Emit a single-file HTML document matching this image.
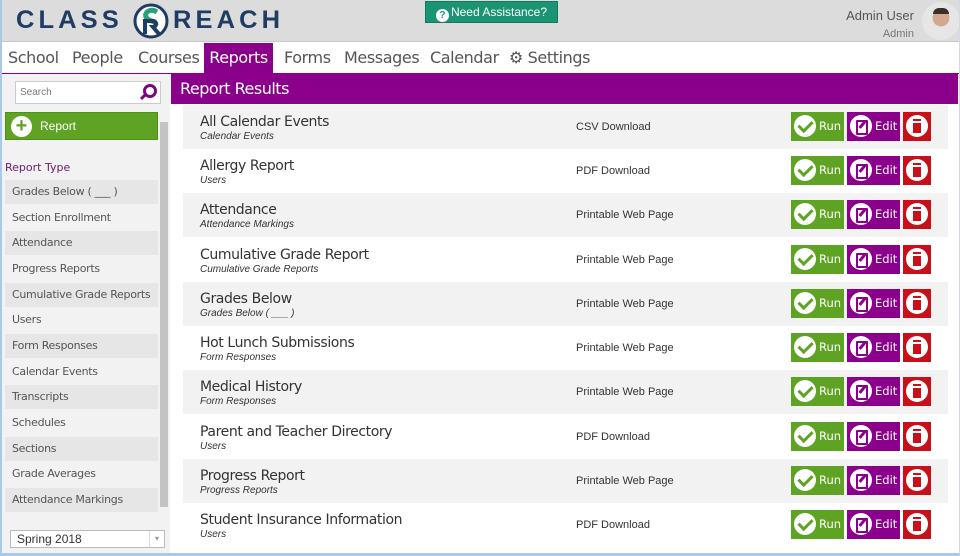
<!DOCTYPE html>
<html><head><style>
*{box-sizing:border-box;margin:0;padding:0}
body{width:960px;height:556px;overflow:hidden;background:#fff;font-family:"Liberation Sans",sans-serif;position:relative}
.frame{position:absolute;left:0;top:0;width:960px;height:556px;border-left:2px solid #a9c9e8;border-bottom:3px solid #a9c9e8;border-right:1px solid #cfdbe8}
.hdr{position:absolute;left:2px;top:0;width:957px;height:42px;background:#dcdcdc;border-bottom:1px solid #c8c8c8}
.logo{position:absolute;top:6px;font-size:25px;font-weight:bold;color:#1f3d63;letter-spacing:4px;transform:scaleX(1.02);transform-origin:left}
.help{position:absolute;left:423px;top:1px;width:133px;height:22px;background:#1b9473;border:1px solid #147a5e;color:#fff;font-size:12px;text-align:center;line-height:20px}
.help b{display:inline-block;width:13px;height:13px;border-radius:50%;background:#fff;color:#1b9473;font-size:10px;line-height:13px;vertical-align:-2px;margin-right:2px}
.user{position:absolute;right:45px;top:7px;text-align:right;color:#555;font-size:13px;line-height:17px}
.user small{font-size:11px;color:#777}
.av{position:absolute;left:920px;top:2px;width:38px;height:38px;border-radius:50%;background:radial-gradient(circle at 50% 42%,#d4a88e 0 28%,#e6e6e6 30%);overflow:hidden}
.av:after{content:"";position:absolute;left:11px;top:6px;width:16px;height:6px;background:#3a2e28;border-radius:6px 6px 0 0}
.nav{position:absolute;left:2px;top:43px;height:31px;width:957px;background:#fff;border-bottom:1px solid #8b008b}
.nav span{position:absolute;top:0;height:30px;line-height:30px;font-size:16px;color:#555;font-family:"DejaVu Sans",sans-serif;letter-spacing:-0.4px}
.nav .on{background:#8b008b;color:#fff;width:69px;text-align:center}
.side{position:absolute;left:2px;top:74px;width:168px;height:479px;background:#f2f2f2}
.search{position:absolute;left:13px;top:7px;width:146px;height:23px;background:#fff;border:1px solid #ccc;font-size:10px;color:#777;padding:5px 4px}
.mag{position:absolute;right:3px;top:2px;width:14px;height:14px;border:3px solid #7a0a7a;border-radius:50%}
.mag:after{content:"";position:absolute;left:-6px;top:8px;width:7px;height:3px;background:#7a0a7a;transform:rotate(-45deg)}
.add{position:absolute;left:3px;top:38px;width:153px;height:28px;background:#5fa324;border:1px solid #4e8e1a;color:#fff;font-size:12px;line-height:26px;padding-left:34px}
.add i{position:absolute;left:5px;top:3px;width:21px;height:21px;border-radius:50%;background:#fff;color:#5fa324;font-style:normal;font-weight:bold;font-size:20px;line-height:21px;text-align:center}
.rt{position:absolute;left:3px;top:87px;font-size:11px;color:#6a1a6a;font-family:"DejaVu Sans",sans-serif}
.li{position:absolute;left:3px;width:153px;height:24px;font-size:11px;color:#555;line-height:24px;padding-left:7px;font-family:"DejaVu Sans",sans-serif;letter-spacing:-0.3px}
.li.g{background:#e6e6e6}
.sb{position:absolute;left:157px;top:40px;width:9px;height:406px;background:#f2f2f2}
.sb div{position:absolute;left:1px;top:8px;width:8px;height:385px;background:#c3c3c3}
.sel{position:absolute;left:8px;top:456px;width:155px;height:18px;background:#fff;border:1px solid #bbb;font-size:12px;color:#333;padding:1px 6px}
.sel:after{content:"▾";position:absolute;right:0;top:0;width:14px;height:16px;border-left:1px solid #ddd;font-size:8px;color:#999;text-align:center;line-height:16px}
.bar{position:absolute;left:171px;top:74px;width:787px;height:30px;background:#8b008b;color:#fff;font-size:16px;line-height:30px;padding-left:9px;font-family:"DejaVu Sans",sans-serif;letter-spacing:-0.5px}
.row{position:absolute;left:183px;width:765px;height:44px}
.row.g{background:#f2f2f2}
.t{position:absolute;left:17px;top:9px;font-size:14px;color:#333;font-family:"DejaVu Sans",sans-serif;letter-spacing:-0.4px}
.s{position:absolute;left:17px;top:26px;font-size:10px;color:#333;font-style:italic}
.d{position:absolute;left:393px;top:16px;font-size:11px;color:#333}
.b{position:absolute;top:7px;height:29px;color:#fff;font-size:11.5px;line-height:29px;font-family:"DejaVu Sans",sans-serif}
.run{left:608px;width:53px;background:#5fa324}
.edit{left:664px;width:53px;background:#8b008b}
.del{left:720px;width:28px;background:#c8101a}
.b i{position:absolute;left:3px;top:3px;width:22px;height:22px;border-radius:50%;background:#fff}
.run span,.edit span{position:absolute;left:28px}
.run i:after{content:"";position:absolute;left:7px;top:3px;width:6px;height:11px;border:solid #5fa324;border-width:0 3px 3px 0;transform:rotate(45deg)}
.edit i:after{content:"";position:absolute;left:6px;top:5px;width:8px;height:11px;border:2px solid #8b008b;border-radius:1px}
.edit i:before{content:"";position:absolute;left:11px;top:5px;width:3px;height:9px;background:#8b008b;transform:rotate(40deg)}
.del i:after{content:"";position:absolute;left:7px;top:6px;width:8px;height:10px;background:#c8101a;border-top:2px solid #fff;box-shadow:0 -2px 0 #c8101a}
</style></head><body>
<div class="hdr">
<div class="logo" style="left:14px">CLASS</div>
<svg style="position:absolute;left:131px;top:3px" width="36" height="36" viewBox="0 0 36 36"><circle cx="18" cy="18" r="16" fill="#fff" stroke="#1f3d63" stroke-width="3"/><path d="M24 9c-6-4-13 0-11 5s10 3 10 8" stroke="#2aa07a" stroke-width="5" fill="none"/><path d="M12 31V18h8c4 0 4 6 0 6l6 7" stroke="#1f3d63" stroke-width="4" fill="none"/></svg>
<div class="logo" style="left:171px">REACH</div>
<div class="help"><b>?</b>Need Assistance?</div>
<div class="user">Admin User<br><small>Admin</small></div>
<div class="av"></div>
</div>
<div class="nav">
<span style="left:6px">School</span><span style="left:70px">People</span><span style="left:136px">Courses</span><span class="on" style="left:202px">Reports</span><span style="left:282px">Forms</span><span style="left:342px">Messages</span><span style="left:428px">Calendar</span><span style="left:507px">⚙ Settings</span>
</div>
<div class="side">
<div class="search">Search<div class="mag"></div></div>
<div class="add"><i>+</i>Report</div>
<div class="rt">Report Type</div>
<div class="li g" style="top:106px">Grades Below ( ___ )</div>
<div class="li" style="top:132px">Section Enrollment</div>
<div class="li g" style="top:157px">Attendance</div>
<div class="li" style="top:183px">Progress Reports</div>
<div class="li g" style="top:209px">Cumulative Grade Reports</div>
<div class="li" style="top:234px">Users</div>
<div class="li g" style="top:260px">Form Responses</div>
<div class="li" style="top:286px">Calendar Events</div>
<div class="li g" style="top:311px">Transcripts</div>
<div class="li" style="top:337px">Schedules</div>
<div class="li g" style="top:363px">Sections</div>
<div class="li" style="top:388px">Grade Averages</div>
<div class="li g" style="top:414px">Attendance Markings</div>
<div class="sb"><div></div></div>
<div class="sel">Spring 2018</div>
</div>
<div class="bar">Report Results</div>

<div class="row g" style="top:105px"><div class="t">All Calendar Events</div><div class="s">Calendar Events</div><div class="d">CSV Download</div><div class="b run"><i></i><span>Run</span></div><div class="b edit"><i></i><span>Edit</span></div><div class="b del"><i></i></div></div>
<div class="row" style="top:149px"><div class="t">Allergy Report</div><div class="s">Users</div><div class="d">PDF Download</div><div class="b run"><i></i><span>Run</span></div><div class="b edit"><i></i><span>Edit</span></div><div class="b del"><i></i></div></div>
<div class="row g" style="top:193px"><div class="t">Attendance</div><div class="s">Attendance Markings</div><div class="d">Printable Web Page</div><div class="b run"><i></i><span>Run</span></div><div class="b edit"><i></i><span>Edit</span></div><div class="b del"><i></i></div></div>
<div class="row" style="top:238px"><div class="t">Cumulative Grade Report</div><div class="s">Cumulative Grade Reports</div><div class="d">Printable Web Page</div><div class="b run"><i></i><span>Run</span></div><div class="b edit"><i></i><span>Edit</span></div><div class="b del"><i></i></div></div>
<div class="row g" style="top:282px"><div class="t">Grades Below</div><div class="s">Grades Below ( ___ )</div><div class="d">Printable Web Page</div><div class="b run"><i></i><span>Run</span></div><div class="b edit"><i></i><span>Edit</span></div><div class="b del"><i></i></div></div>
<div class="row" style="top:326px"><div class="t">Hot Lunch Submissions</div><div class="s">Form Responses</div><div class="d">Printable Web Page</div><div class="b run"><i></i><span>Run</span></div><div class="b edit"><i></i><span>Edit</span></div><div class="b del"><i></i></div></div>
<div class="row g" style="top:370px"><div class="t">Medical History</div><div class="s">Form Responses</div><div class="d">Printable Web Page</div><div class="b run"><i></i><span>Run</span></div><div class="b edit"><i></i><span>Edit</span></div><div class="b del"><i></i></div></div>
<div class="row" style="top:415px"><div class="t">Parent and Teacher Directory</div><div class="s">Users</div><div class="d">PDF Download</div><div class="b run"><i></i><span>Run</span></div><div class="b edit"><i></i><span>Edit</span></div><div class="b del"><i></i></div></div>
<div class="row g" style="top:459px"><div class="t">Progress Report</div><div class="s">Progress Reports</div><div class="d">Printable Web Page</div><div class="b run"><i></i><span>Run</span></div><div class="b edit"><i></i><span>Edit</span></div><div class="b del"><i></i></div></div>
<div class="row" style="top:503px"><div class="t">Student Insurance Information</div><div class="s">Users</div><div class="d">PDF Download</div><div class="b run"><i></i><span>Run</span></div><div class="b edit"><i></i><span>Edit</span></div><div class="b del"><i></i></div></div>
<div class="frame"></div>
</body></html>
